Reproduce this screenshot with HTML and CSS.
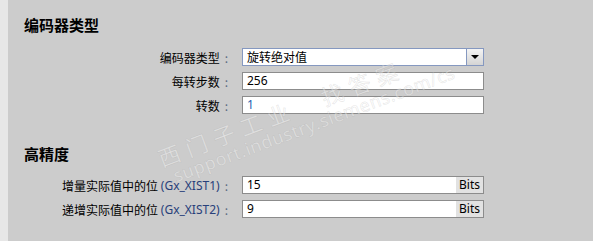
FILE: index.html
```html
<!DOCTYPE html>
<html lang="zh-CN">
<head>
  <meta charset="UTF-8">
  <title>编码器类型</title>
  <link rel="stylesheet" href="styles.css">
</head>
<body>
  <div class="page">
    <div class="strip"></div>
    <div class="main">
      <h2 class="title">编码器类型</h2>
      <div class="form">
        <div class="label">编码器类型<span class="colon">:</span></div>
        <div class="select">
          <span class="value">旋转绝对值</span>
          <span class="drop"><i class="arrow"></i></span>
        </div>
        <div class="label">每转步数<span class="colon">:</span></div>
        <div class="field"><span class="value">256</span></div>
        <div class="label">转数<span class="colon">:</span></div>
        <div class="field"><span class="value blue">1</span></div>
      </div>

      <h2 class="title second">高精度</h2>
      <div class="form">
        <div class="label">增量实际值中的位 <span class="tag">(Gx_XIST1)</span><span class="colon">:</span></div>
        <div class="field"><span class="value">15</span><span class="unit">Bits</span></div>
        <div class="label">递增实际值中的位 <span class="tag">(Gx_XIST2)</span><span class="colon">:</span></div>
        <div class="field"><span class="value">9</span><span class="unit">Bits</span></div>
      </div>

      <!-- watermark -->
      <div class="mark">
        <div class="mark-cn">西门子工业　找答案</div>
        <div class="mark-en">support.industry.siemens.com/cs</div>
      </div>
    </div>
  </div>
</body>
</html>
```

FILE: styles.css
```css
html,body{margin:0;padding:0;}
body{font-family:"Noto Sans","Noto Sans CJK SC",sans-serif;font-size:12px;color:#000;}
.page{display:flex;width:593px;height:241px;overflow:hidden;}
.strip{width:8px;background:#e7e7e7;}
.main{flex:1;background:#cccccc;padding:15px 0 0 16px;position:relative;}
.title{margin:0;font-size:15px;line-height:20px;font-weight:bold;font-family:"Noto Sans CJK SC",sans-serif;}
.title.second{margin-top:30px;}
.form{display:grid;grid-template-columns:218px 242px;row-gap:6px;margin-top:13px;}
.title.second + .form{margin-top:12px;}
.label{display:flex;align-items:center;justify-content:flex-end;padding-right:22px;height:18px;white-space:pre;font-family:"Noto Sans CJK SC",sans-serif;}
.colon{color:#5a6a80;margin-left:5px;margin-right:-8px;}
.tag{color:#28407a;font-family:"Noto Sans",sans-serif;}
.field,.select{box-sizing:border-box;height:18px;background:#fff;border:1px solid #8c8c8c;display:flex;align-items:center;}
.select{border-color:#8598c0;}
.value{flex:1;padding-left:4px;line-height:16px;}
.select .value{font-family:"Noto Sans CJK SC",sans-serif;}
.blue{color:#1f5fb0;}
.drop{width:16px;height:16px;border-left:1px solid #8598c0;background:linear-gradient(#f4f4f4,#d4d4d4);display:flex;align-items:center;justify-content:center;}
.arrow{width:0;height:0;border-left:4px solid transparent;border-right:4px solid transparent;border-top:4px solid #000;}
.unit{width:27px;height:16px;line-height:16px;background:#e2e2e2;padding-left:3px;box-sizing:border-box;}
.mark{position:absolute;left:146px;top:146px;transform:rotate(-20.5deg);transform-origin:left top;pointer-events:none;color:rgba(255,255,255,0.4);-webkit-text-stroke:0.6px rgba(150,150,150,0.25);white-space:nowrap;}
.mark-cn{font-family:"Noto Sans CJK SC",sans-serif;font-size:22px;letter-spacing:7px;line-height:26px;}
.mark-en{font-family:"Noto Sans",sans-serif;font-size:18px;letter-spacing:0.6px;line-height:18px;margin-left:8px;}
```
